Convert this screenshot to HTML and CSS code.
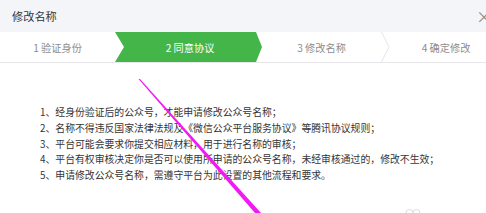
FILE: index.html
```html
<!DOCTYPE html>
<html lang="zh-CN">
<head>
  <meta charset="UTF-8" />
  <title>修改名称</title>
  <link rel="stylesheet" href="styles.css">
</head>
<body>
  <div class="dialog">
    <div class="head">
      <span class="title">修改名称</span>
      <span class="close">×</span>
    </div>
    <div class="steps">
      <div class="step step-1">1 验证身份</div>
      <div class="step step-2 current">2 同意协议</div>
      <div class="step step-3">3 修改名称</div>
      <svg class="sep" width="9" height="30" viewBox="0 0 9 30">
        <polyline points="0.5,0 8,15 0.5,30" fill="none" stroke="#e3e5e8" stroke-width="1"/>
      </svg>
      <div class="step step-4">4 确定修改</div>
    </div>
    <ol class="rules">
      <li>1、经身份验证后的公众号，才能申请修改公众号名称；</li>
      <li>2、名称不得违反国家法律法规及《微信公众平台服务协议》等腾讯协议规则；</li>
      <li>3、平台可能会要求你提交相应材料，用于进行名称的审核；</li>
      <li>4、平台有权审核决定你是否可以使用所申请的公众号名称，未经审核通过的，修改不生效；</li>
      <li>5、申请修改公众号名称，需遵守平台为此设置的其他流程和要求。</li>
    </ol>
  </div>

  <svg class="mark" width="486" height="213" viewBox="0 0 486 213">
    <polygon points="138.5,79 140,79 261,213 255,213" fill="#f21af2"/>
    <path d="M406,213 a3.5,3.5 0 0 1 7,0 M413,213 a3.5,3.5 0 0 1 7,0" fill="none" stroke="#dcdcdc" stroke-width="1"/>
  </svg>
</body>
</html>
```

FILE: styles.css
```css
* {
  margin: 0;
  padding: 0;
  box-sizing: border-box;
}
html, body {
  width: 486px;
  height: 213px;
  overflow: hidden;
  background: #fff;
  font-family: "Noto Sans CJK SC", "Noto Sans", sans-serif;
}
body {
  position: relative;
}
.dialog {
  width: 510px;
}
.head {
  height: 32px;
  background: #f4f5f9;
  display: flex;
  align-items: center;
  justify-content: space-between;
  padding: 0 18px 0 12px;
}
.title {
  font-size: 11.2px;
  color: #353535;
}
.close {
  font-size: 16px;
  color: #8d8d8d;
  line-height: 1;
}
.steps {
  display: flex;
  height: 31px;
  border-bottom: 1px solid #e7e7eb;
}
.step {
  height: 30px;
  display: flex;
  align-items: center;
  justify-content: center;
  font-size: 10.2px;
  color: #8d8d8d;
}
.step-1 {
  width: 115px;
}
.step-2 {
  width: 147px;
  padding-left: 9px;
  padding-right: 6px;
}
.step-3 {
  width: 119px;
}
.sep {
  flex: none;
  display: block;
}
.step-4 {
  width: 112px;
}
.current {
  background: #44b549;
  color: #fff;
  clip-path: polygon(0 0, 141px 0, 147px 50%, 141px 100%, 0 100%, 9px 50%);
}
.rules {
  list-style: none;
  padding: 42px 0 0 40px;
  font-size: 9.85px;
  line-height: 15.8px;
  color: #353535;
  white-space: nowrap;
}
.mark {
  position: absolute;
  left: 0;
  top: 0;
}
```
